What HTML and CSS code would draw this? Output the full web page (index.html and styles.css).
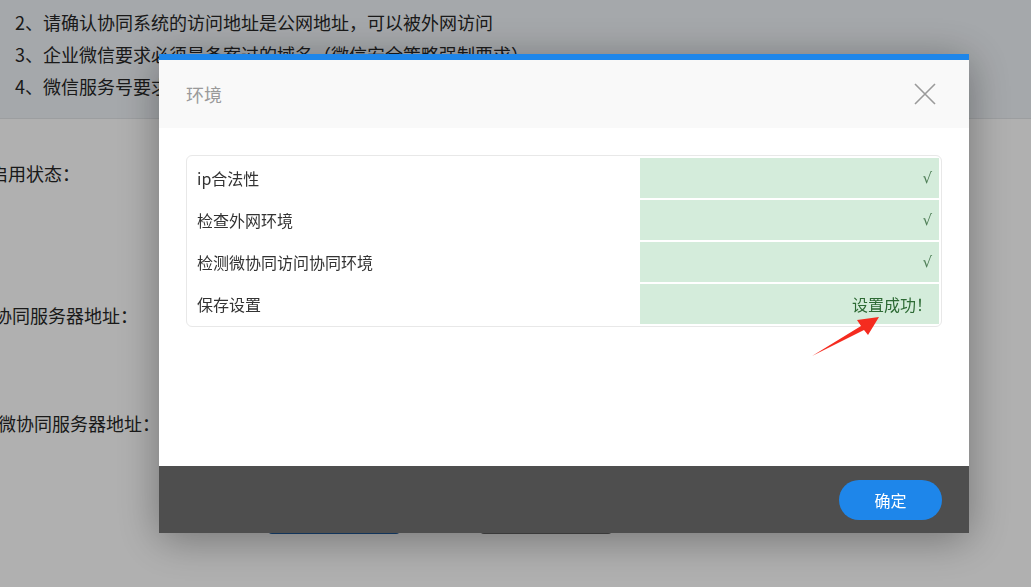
FILE: index.html
```html
<!DOCTYPE html>
<html lang="zh-CN">
<head>
  <meta charset="UTF-8" />
  <meta name="viewport" content="width=device-width, initial-scale=1" />
  <title>环境</title>
  <link rel="stylesheet" href="styles.css">
</head>
<body>
  <div class="page">
    <div class="notice">
      <p>2、请确认协同系统的访问地址是公网地址，可以被外网访问</p>
      <p>3、企业微信要求必须是备案过的域名（微信安全策略强制要求）</p>
      <p>4、微信服务号要求必须是备案过的域名</p>
    </div>
    <div class="form">
      <div class="form-row row-status"><span class="label label-status">启用状态：</span></div>
      <div class="form-row row-server"><span class="label label-server">协同服务器地址：</span></div>
      <div class="form-row row-wx"><span class="label label-wx">微协同服务器地址：</span></div>
      <div class="form-actions">
        <button class="btn btn-save">保存</button>
        <button class="btn btn-test">测试</button>
      </div>
    </div>
  </div>

  <div class="mask"></div>

  <div class="dialog">
    <div class="dialog-head">
      <span class="dialog-title">环境</span>
      <button class="dialog-close" title="关闭">
        <svg width="22" height="22" viewBox="0 0 22 22">
          <path d="M1 1 L21 21 M21 1 L1 21" stroke="#9a9a9a" stroke-width="1.6" fill="none" />
        </svg>
      </button>
    </div>
    <div class="dialog-body">
      <div class="checks">
        <div class="check-row">
          <span class="check-name">ip合法性</span>
          <span class="check-result tick">√</span>
        </div>
        <div class="check-row">
          <span class="check-name">检查外网环境</span>
          <span class="check-result tick">√</span>
        </div>
        <div class="check-row">
          <span class="check-name">检测微协同访问协同环境</span>
          <span class="check-result tick">√</span>
        </div>
        <div class="check-row">
          <span class="check-name">保存设置</span>
          <span class="check-result result-text">设置成功！</span>
        </div>
      </div>
    </div>
    <div class="dialog-foot">
      <button class="btn-ok">确定</button>
    </div>
  </div>

  <!-- 标注箭头 -->
  <svg class="arrow" width="80" height="50" viewBox="0 0 80 50">
    <polygon points="7,44 59,18 63,23 74,5 52,8 56,14" fill="#f52b1f" />
  </svg>
</body>
</html>
```

FILE: styles.css
```css
* {
  box-sizing: border-box;
}

body {
  margin: 0;
  font-family: 'Noto Sans CJK SC', 'Liberation Sans', sans-serif;
  background: #fcfcfc;
  color: #262626;
  overflow: hidden;
  height: 587px;
}

.notice {
  background: #edf1f5;
  border-bottom: 1px solid #e0e3e6;
  padding: 6px 15px 7px;
  height: 119px;
}

.notice p {
  margin: 0;
  font-size: 18px;
  line-height: 32px;
}

.form {
  position: relative;
}

.form-row {
  font-size: 18px;
  line-height: 24px;
}

.row-status {
  padding-top: 42px;
}

.row-server {
  padding-top: 118px;
}

.row-wx {
  padding-top: 84px;
}

.label {
  display: inline-block;
  white-space: nowrap;
}

.label-status {
  margin-left: -10px;
}

.label-server {
  margin-left: -6px;
}

.label-wx {
  margin-left: -2px;
}

.form-actions {
  display: flex;
  gap: 80px;
  margin: 63px 0 0 268px;
}

.btn {
  width: 132px;
  height: 36px;
  border: none;
  border-radius: 4px;
  font-size: 16px;
  color: #fff;
}

.btn-save {
  background: #1f5fa3;
}

.btn-test {
  background: #6a6a6a;
}

.mask {
  position: fixed;
  inset: 0;
  background: rgba(0, 0, 0, 0.3);
}

.dialog {
  position: fixed;
  top: 54px;
  left: 159px;
  width: 810px;
  background: #fff;
  border-top: 6px solid #1e86ea;
  box-shadow: 0 6px 40px rgba(0, 0, 0, 0.35);
}

.dialog-head {
  height: 68px;
  background: #f9f9f9;
  display: flex;
  align-items: center;
  justify-content: space-between;
  padding: 0 33px 0 27px;
}

.dialog-title {
  font-size: 18px;
  color: #9a9a9a;
}

.dialog-close {
  background: none;
  border: none;
  padding: 0;
  display: flex;
  cursor: pointer;
}

.dialog-body {
  height: 338px;
  padding: 27px;
}

.checks {
  border: 1px solid #e8e8e8;
  border-radius: 6px;
  padding: 2px 2px 2px 1px;
  display: flex;
  flex-direction: column;
  gap: 2px;
}

.check-row {
  display: flex;
  height: 40px;
  align-items: stretch;
}

.check-name {
  flex: 1;
  display: flex;
  align-items: center;
  padding-left: 9px;
  font-size: 16px;
  color: #333;
}

.check-result {
  width: 299px;
  background: #d4ecdb;
  display: flex;
  align-items: center;
  justify-content: flex-end;
  padding-right: 8px;
  font-size: 16px;
  color: #4f7f57;
}

.tick {
  font-family: 'DejaVu Sans', sans-serif;
  font-size: 15px;
  padding-right: 7px;
}

.result-text {
  color: #2d6a34;
  padding-right: 7px;
}

.dialog-foot {
  height: 67px;
  background: #4e4e4e;
  display: flex;
  align-items: center;
  justify-content: flex-end;
  padding-right: 27px;
}

.btn-ok {
  width: 103px;
  height: 40px;
  border: none;
  border-radius: 20px;
  background: #1e86ea;
  color: #fff;
  font-family: inherit;
  font-size: 16px;
  cursor: pointer;
}

.arrow {
  position: fixed;
  left: 805px;
  top: 312px;
}
```
